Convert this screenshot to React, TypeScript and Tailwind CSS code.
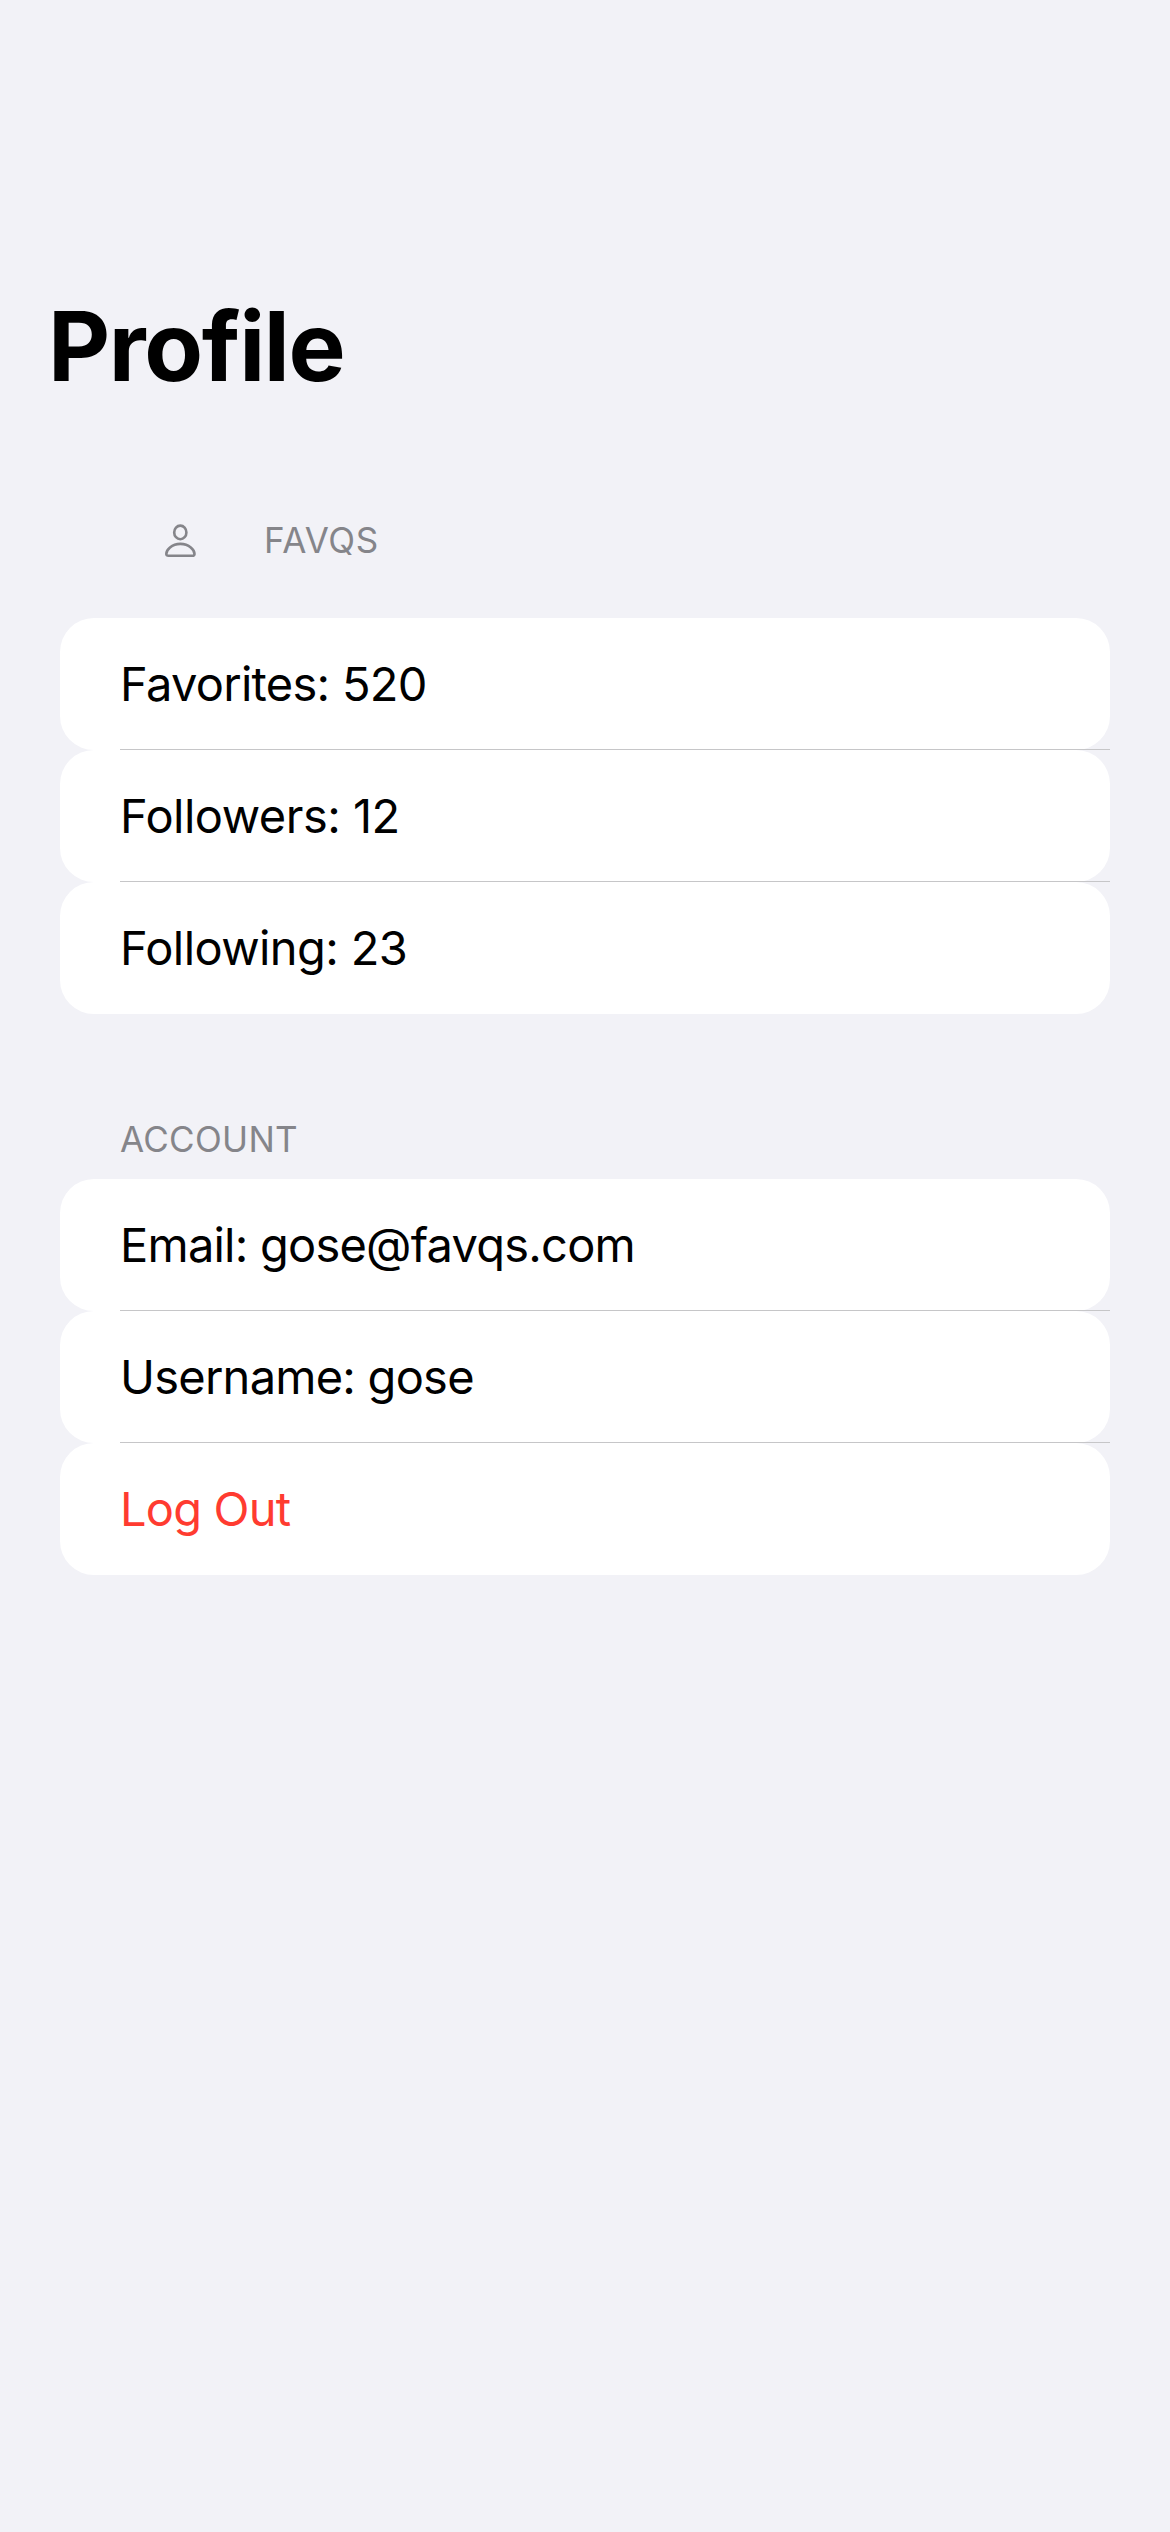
type RowProps = { text: string; className: string; last?: boolean };

function Row({ text, className, last }: RowProps) {
  return (
    <div className="relative flex h-[132px] items-center rounded-[34px] bg-white pl-[60px] text-[47px] leading-[62px]">
      <span className={`whitespace-nowrap ${className}`}>{text}</span>
      {!last && <div className="absolute right-0 bottom-0 left-[60px] h-px bg-[#c6c6c8]" />}
    </div>
  );
}

export default function App() {
  return (
    <main className="h-[2532px] w-[1170px] bg-[#f2f2f7] px-[60px] pt-[286px] font-['Inter',sans-serif]">
      <h1 className="-ml-[12px] h-[120px] text-[96px] leading-[120px] font-bold tracking-[-1.4px] text-black">Profile</h1>
      <div className="flex h-[212px] items-center pt-[57px] pl-[104px] text-[35px] tracking-[0.7px] text-[#85858a]">
        <svg width="33" height="36" viewBox="0 0 33 36" fill="none" stroke="currentColor" strokeWidth="2.6">
          <ellipse cx="16.300" cy="9.400" rx="6.100" ry="6.800" />
          <path d="M4.600 32.700C2.900 32.700 2.300 32.100 2.300 30.900C2.300 27.200 7.500 20.900 16.400 20.900S30.500 27.200 30.500 30.900C30.500 32.100 29.900 32.700 28.200 32.700Z" />
        </svg>
        <span className="ml-[67px]">FAVQS</span>
      </div>
      <section>
        <Row text="Favorites: 520" className="tracking-[-0.7px]" />
        <Row text="Followers: 12" className="tracking-[-0.5px]" />
        <Row text="Following: 23" className="tracking-[-0.6px]" last />
      </section>
      <h2 className="mt-[94px] mb-[9px] flex h-[62px] items-center pl-[60px] text-[35px] tracking-[0.3px] text-[#85858a]">ACCOUNT</h2>
      <section>
        <Row text="Email: gose@favqs.com" className="tracking-[-0.77px]" />
        <Row text="Username: gose" className="tracking-[-0.75px]" />
        <Row text="Log Out" className="tracking-[-0.8px] text-[#ff3b30]" last />
      </section>
    </main>
  );
}
